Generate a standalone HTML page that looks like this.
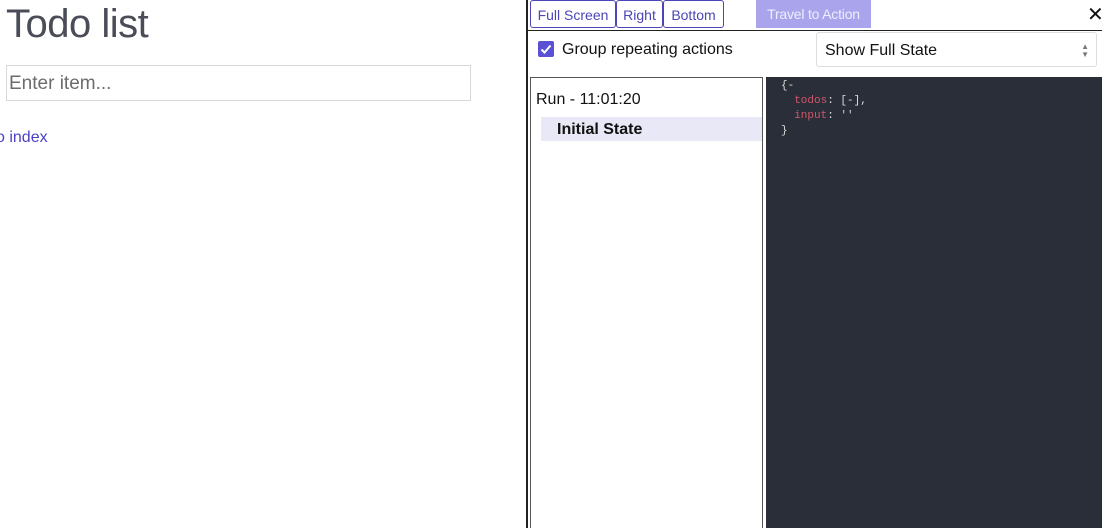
<!DOCTYPE html>
<html style="overflow:hidden;height:528px"><head><style>
*{box-sizing:border-box;margin:0;padding:0}
body{width:1102px;height:528px;background:#fff;font-family:"Liberation Sans",sans-serif;position:relative;overflow:hidden}
.a{position:absolute}
.btn{position:absolute;top:0;height:28px;border:1px solid #4b45b8;border-radius:3px;color:#4b45b8;font-size:14px;line-height:28px;text-align:center;background:#fff}
.code{font-family:"Liberation Mono",monospace;font-size:11px;line-height:15px;color:#ddd}
</style></head><body>
<div class="a" style="left:6px;top:2px;font-size:40px;color:#4a4d57;letter-spacing:-0.5px">Todo list</div>
<div class="a" style="left:6px;top:65px;width:465px;height:36px;border:1px solid #d8d8d8;font-size:19px;color:#6c6c6c;padding-left:2px;line-height:36px">Enter item...</div>
<div class="a" style="left:-4px;top:129px;font-size:16px;color:#4b3fc6">o index</div>

<div class="a" style="left:526px;top:0;width:2px;height:528px;background:#222"></div>
<div class="btn" style="left:530px;width:86px">Full Screen</div>
<div class="btn" style="left:616px;width:47px">Right</div>
<div class="btn" style="left:663px;width:61px">Bottom</div>
<div class="a" style="left:756px;top:0;width:115px;height:28px;background:#a9a4ec;color:#eeeefc;font-size:14px;line-height:28px;text-align:center;letter-spacing:-0.2px">Travel to Action</div>
<div class="a" style="left:1087px;top:3px;font-size:20px;line-height:24px;color:#111">✕</div>
<div class="a" style="left:528px;top:30px;width:574px;height:1px;background:#222"></div>

<div class="a" style="left:538px;top:41px;width:16px;height:16px;background:#5a52d5;border-radius:2px"><svg width="16" height="16"><path d="M3.5 8.5l3 3 6-7" stroke="#fff" stroke-width="2" fill="none"/></svg></div>
<div class="a" style="left:562px;top:41px;font-size:16px;color:#111">Group repeating actions</div>
<div class="a" style="left:816px;top:32px;width:281px;height:35px;border:1px solid #ddd;border-radius:3px;font-size:16px;line-height:35px;padding-left:8px;color:#111">Show Full State<span style="position:absolute;right:7px;font-size:8px;color:#777;line-height:8px;top:10px">▲<br>▼</span></div>

<div class="a" style="left:530px;top:77px;width:233px;height:451px;border:1px solid #555;border-bottom:none"></div>
<div class="a" style="left:536px;top:91px;font-size:16px;color:#111">Run - 11:01:20</div>
<div class="a" style="left:541px;top:117px;width:221px;height:24px;background:#e8e8f6"></div>
<div class="a" style="left:557px;top:121px;font-size:16px;font-weight:bold;color:#111">Initial State</div>

<div class="a" style="left:766px;top:77px;width:336px;height:451px;background:#2a2e39"></div>
<div class="a code" style="left:781px;top:79px">{-<br>&nbsp;&nbsp;<span style="color:#d2566c">todos</span>: [-],<br>&nbsp;&nbsp;<span style="color:#d2566c">input</span>: <span style="color:#ccc">''</span><br>}</div>
</body></html>
